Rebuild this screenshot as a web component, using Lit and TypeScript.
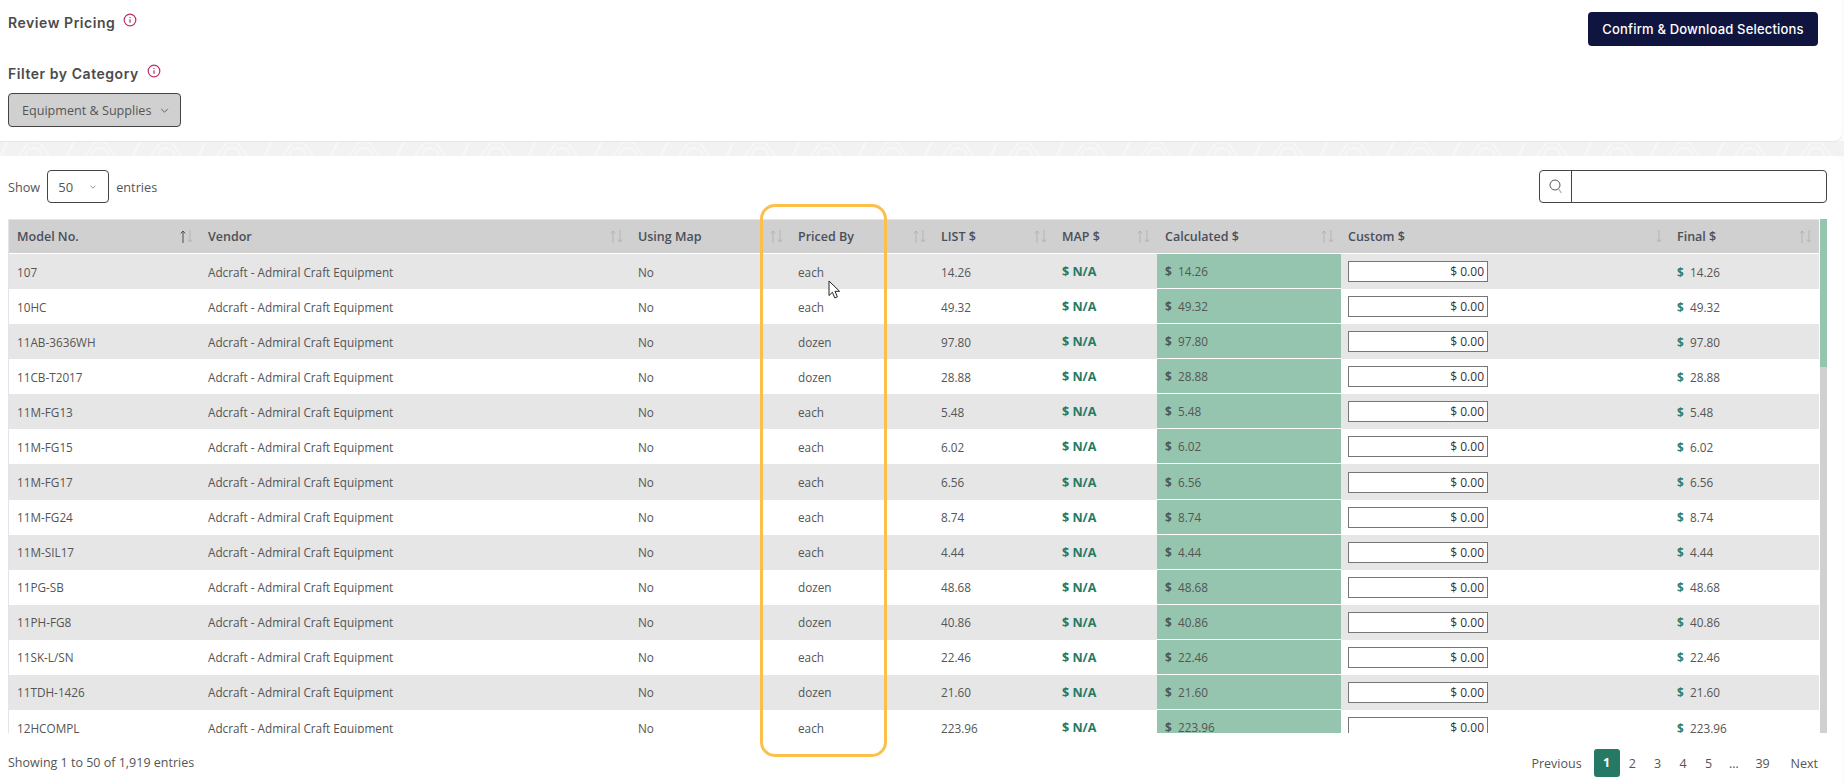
import { LitElement, html, css, svg } from 'lit';
import { customElement } from 'lit/decorators.js';

type Row = [string, string, string];

const ROWS: Row[] = [
  ['107', 'each', '14.26'],
  ['10HC', 'each', '49.32'],
  ['11AB-3636WH', 'dozen', '97.80'],
  ['11CB-T2017', 'dozen', '28.88'],
  ['11M-FG13', 'each', '5.48'],
  ['11M-FG15', 'each', '6.02'],
  ['11M-FG17', 'each', '6.56'],
  ['11M-FG24', 'each', '8.74'],
  ['11M-SIL17', 'each', '4.44'],
  ['11PG-SB', 'dozen', '48.68'],
  ['11PH-FG8', 'dozen', '40.86'],
  ['11SK-L/SN', 'each', '22.46'],
  ['11TDH-1426', 'dozen', '21.60'],
  ['12HCOMPL', 'each', '223.96'],
];

const COLS = [191, 430, 160, 143, 121, 103, 184, 328, 150];

const HEADS: [string, 'both' | 'asc' | 'down'][] = [
  ['Model No.', 'asc'],
  ['Vendor', 'both'],
  ['Using Map', 'both'],
  ['Priced By', 'both'],
  ['LIST $', 'both'],
  ['MAP $', 'both'],
  ['Calculated $', 'both'],
  ['Custom $', 'down'],
  ['Final $', 'both'],
];

const info = html`<svg class="info" width="14" height="14" viewBox="0 0 14 14" fill="none" stroke="#bd2f66" stroke-width="1.2">
  <circle cx="7" cy="7" r="5.8"></circle>
  <path d="M7 6.3v3.4M7 4.1v1"></path>
</svg>`;

const chevron = (w: number) => html`<svg width=${w} height=${Math.round(w * 0.6)} viewBox="0 0 10 6" fill="none" stroke="#555" stroke-width="1.1">
  <path d="M1 1l4 4 4-4"></path>
</svg>`;

function sortIcon(mode: 'both' | 'asc' | 'down') {
  const up = mode === 'asc' ? '#4a4f5a' : '#b4b4b4';
  return html`<svg class="sort" width="13" height="13" viewBox="0 0 13 13" fill="none" stroke-width="1">
    ${mode === 'down' ? '' : svg`<path d="M3 13V1M.8 3.4L3 1l2.2 2.4" stroke=${up}></path>`}
    <path d="M10 0v12M7.8 9.6L10 12l2.2-2.4" stroke="#b4b4b4"></path>
  </svg>`;
}

@customElement('app-root')
export class AppRoot extends LitElement {
  static styles = css`
    :host {
      display: block;
      position: relative;
      height: 784px;
      overflow: hidden;
      background: #fbfbfb;
      font-family: 'Open Sans', sans-serif;
      font-size: 12px;
      color: #555;
    }

    .card {
      width: 1842px;
      background: #fff;
    }

    .top {
      height: 141px;
      box-sizing: border-box;
      padding: 0 24px 0 8px;
      border-radius: 0 0 8px 0;
      box-shadow: 0 1px 1px #e6e6e6;
      position: relative;
    }

    .top-row {
      display: flex;
      justify-content: space-between;
      align-items: flex-start;
      height: 46px;
    }

    .title {
      display: flex;
      align-items: center;
      gap: 8px;
      height: 18px;
      font-family: Inter, sans-serif;
      font-size: 14px;
      font-weight: 600;
      letter-spacing: 0.55px;
      color: #4b4b4b;
    }

    .top-row .title {
      margin-top: 13px;
    }

    .filter {
      margin-top: 18px;
    }

    .info {
      margin-top: -4px;
    }

    .confirm {
      margin-top: 12px;
      width: 230px;
      height: 34px;
      display: flex;
      align-items: center;
      justify-content: center;
      box-sizing: border-box;
      background: #10153f;
      border-radius: 4px;
      color: #fff;
      font-family: Inter, sans-serif;
      font-size: 13px;
      font-weight: 500;
      letter-spacing: 0.18px;
    }

    .category {
      margin-top: 11px;
      width: 173px;
      height: 34px;
      box-sizing: border-box;
      padding: 0 11px 0 13px;
      display: flex;
      align-items: center;
      justify-content: space-between;
      background: #d0d0d0;
      border: 1px solid #444;
      border-radius: 4px;
      font-size: 12.6px;
      color: #555;
    }

    .band {
      display: block;
      width: 100%;
      height: 15px;
    }

    .main {
      height: 628px;
      border-radius: 0 8px 0 0;
    }

    .controls {
      display: flex;
      justify-content: space-between;
      padding: 14px 15px 16px 8px;
    }

    .show {
      display: flex;
      align-items: center;
      gap: 7px;
      height: 33px;
      font-size: 12.7px;
    }

    .length {
      width: 62px;
      height: 33px;
      box-sizing: border-box;
      padding: 0 12px 0 10px;
      display: flex;
      align-items: center;
      justify-content: space-between;
      border: 1px solid #444;
      border-radius: 4px;
      font-size: 13px;
    }

    .search {
      width: 288px;
      height: 33px;
      box-sizing: border-box;
      display: flex;
      border: 1px solid #444;
      border-radius: 4px;
    }

    .search-icon {
      width: 31px;
      display: flex;
      align-items: center;
      justify-content: center;
      border-right: 1px solid #444;
    }

    .grid {
      display: flex;
      height: 514px;
      margin-left: 8px;
    }

    .scroller {
      width: 1811px;
      overflow: hidden;
    }

    table {
      width: 1811px;
      table-layout: fixed;
      border-collapse: separate;
      border-spacing: 0;
      border-left: 1px solid #dfe5ea;
    }

    th {
      height: 33px;
      padding: 0 7px 0 8px;
      background: #d0d0d0;
      border-top: 1px solid #dfe5ea;
      border-bottom: 1px solid #fff;
      font-size: 12.5px;
      font-weight: 600;
      color: #4a4f5a;
      text-align: left;
    }

    th:nth-child(8) {
      padding-left: 7px;
    }

    th > div {
      display: flex;
      align-items: center;
      justify-content: space-between;
    }

    .sort {
      flex: none;
    }

    td {
      height: 35.08px;
      box-sizing: border-box;
      padding: 0 8px;
      font-size: 11.75px;
      white-space: nowrap;
    }

    tr:nth-child(odd) td {
      background: #e6e6e6;
    }

    tr td.calc {
      background: #95c5ae;
      border-bottom: 1px solid #fff;
    }

    td.map {
      font-size: 12.5px;
      font-weight: 700;
      color: #267a65;
    }

    .cur {
      display: inline-block;
      width: 13px;
      font-weight: 700;
    }

    .calc .cur {
      color: #4b5a52;
    }

    .final .cur {
      color: #2f8069;
    }

    td.custom {
      padding: 0 7px;
    }

    input {
      display: block;
      width: 140px;
      height: 21px;
      box-sizing: border-box;
      padding: 0 3px;
      border: 1px solid #767676;
      background: #fff;
      font-family: 'Open Sans', sans-serif;
      font-size: 12px;
      color: #333;
      text-align: right;
    }

    .bar {
      width: 7px;
      margin-left: 1px;
      background: #d0d0d0;
    }

    .thumb {
      height: 148px;
      background: #95c5ae;
    }

    .foot {
      display: flex;
      justify-content: space-between;
      align-items: flex-start;
      padding: 16px 24px 0 8px;
    }

    .count {
      height: 28px;
      line-height: 28px;
      font-size: 12.5px;
    }

    .pages {
      display: flex;
      align-items: center;
      height: 28px;
      font-size: 12.5px;
      color: #555;
    }

    .pages span {
      width: 25.4px;
      text-align: center;
    }

    .pages .prev {
      width: auto;
      margin-right: 12px;
    }

    .pages .next {
      width: auto;
      margin-left: 12px;
    }

    .pages .wide {
      width: 32px;
    }

    .pages .on {
      width: 26px;
      height: 28px;
      line-height: 28px;
      background: #267a65;
      border-radius: 3px;
      color: #fff;
      font-weight: 700;
    }

    .highlight {
      position: absolute;
      left: 760px;
      top: 204px;
      width: 127px;
      height: 553px;
      box-sizing: border-box;
      border: 3px solid #fdbf4a;
      border-radius: 15px;
      pointer-events: none;
    }

    .pointer {
      position: absolute;
      left: 828px;
      top: 280px;
    }
  `;

  render() {
    return html`
      <section class="card top">
        <div class="top-row">
          <div class="title">Review Pricing ${info}</div>
          <div class="confirm">Confirm &amp; Download Selections</div>
        </div>
        <div class="title filter">Filter by Category ${info}</div>
        <div class="category">Equipment &amp; Supplies ${chevron(9)}</div>
      </section>

      <svg class="band" xmlns="http://www.w3.org/2000/svg">
        <defs>
          <pattern id="hex" width="66" height="15" patternUnits="userSpaceOnUse">
            <rect width="66" height="15" fill="#f2f2f2"></rect>
            <path d="M18 16l8-11q2-4 6-4h4q4 0 6 4l8 11" fill="none" stroke="#f7f7f7" stroke-width="2"></path>
            <path d="M26 16q0-9 8-9t8 9" fill="none" stroke="#f7f7f7" stroke-width="2"></path>
            <path d="M1 15L8 0" fill="none" stroke="#f7f7f7" stroke-width="2.5"></path>
          </pattern>
        </defs>
        <rect width="100%" height="15" fill="url(#hex)"></rect>
      </svg>

      <section class="card main">
        <div class="controls">
          <div class="show">
            Show
            <div class="length">50 ${chevron(6)}</div>
            entries
          </div>
          <div class="search">
            <div class="search-icon">
              <svg width="14" height="16" viewBox="0 0 14 16" fill="none">
                <circle cx="6" cy="6" r="5" stroke="#555" stroke-width="1"></circle>
                <path d="M9.5 10l3 4" stroke="#bbb" stroke-width="1.3"></path>
              </svg>
            </div>
          </div>
        </div>

        <div class="grid">
          <div class="scroller">
            <table>
              <colgroup>${COLS.map((w) => html`<col style="width:${w}px" />`)}</colgroup>
              <thead>
                <tr>${HEADS.map(([label, mode]) => html`<th><div>${label} ${sortIcon(mode)}</div></th>`)}</tr>
              </thead>
              <tbody>
                ${ROWS.map(
                  ([model, unit, price]) => html`<tr>
                    <td>${model}</td>
                    <td>Adcraft - Admiral Craft Equipment</td>
                    <td>No</td>
                    <td>${unit}</td>
                    <td>${price}</td>
                    <td class="map">$ N/A</td>
                    <td class="calc"><span class="cur">$</span>${price}</td>
                    <td class="custom"><input .value=${'$ 0.00'} /></td>
                    <td class="final"><span class="cur">$</span>${price}</td>
                  </tr>`
                )}
              </tbody>
            </table>
          </div>
          <div class="bar"><div class="thumb"></div></div>
        </div>

        <div class="foot">
          <div class="count">Showing 1 to 50 of 1,919 entries</div>
          <div class="pages">
            <span class="prev">Previous</span>
            <span class="on">1</span>
            <span>2</span>
            <span>3</span>
            <span>4</span>
            <span>5</span>
            <span>…</span>
            <span class="wide">39</span>
            <span class="next">Next</span>
          </div>
        </div>
      </section>

      <div class="highlight"></div>
      <svg class="pointer" width="13" height="20" viewBox="0 0 13 20">
        <path d="M1 1v14.5l3.4-3.2 2.4 5.6 2.6-1.1-2.4-5.5h4.6z" fill="#fff" stroke="#222" stroke-width="1"></path>
      </svg>
    `;
  }
}
